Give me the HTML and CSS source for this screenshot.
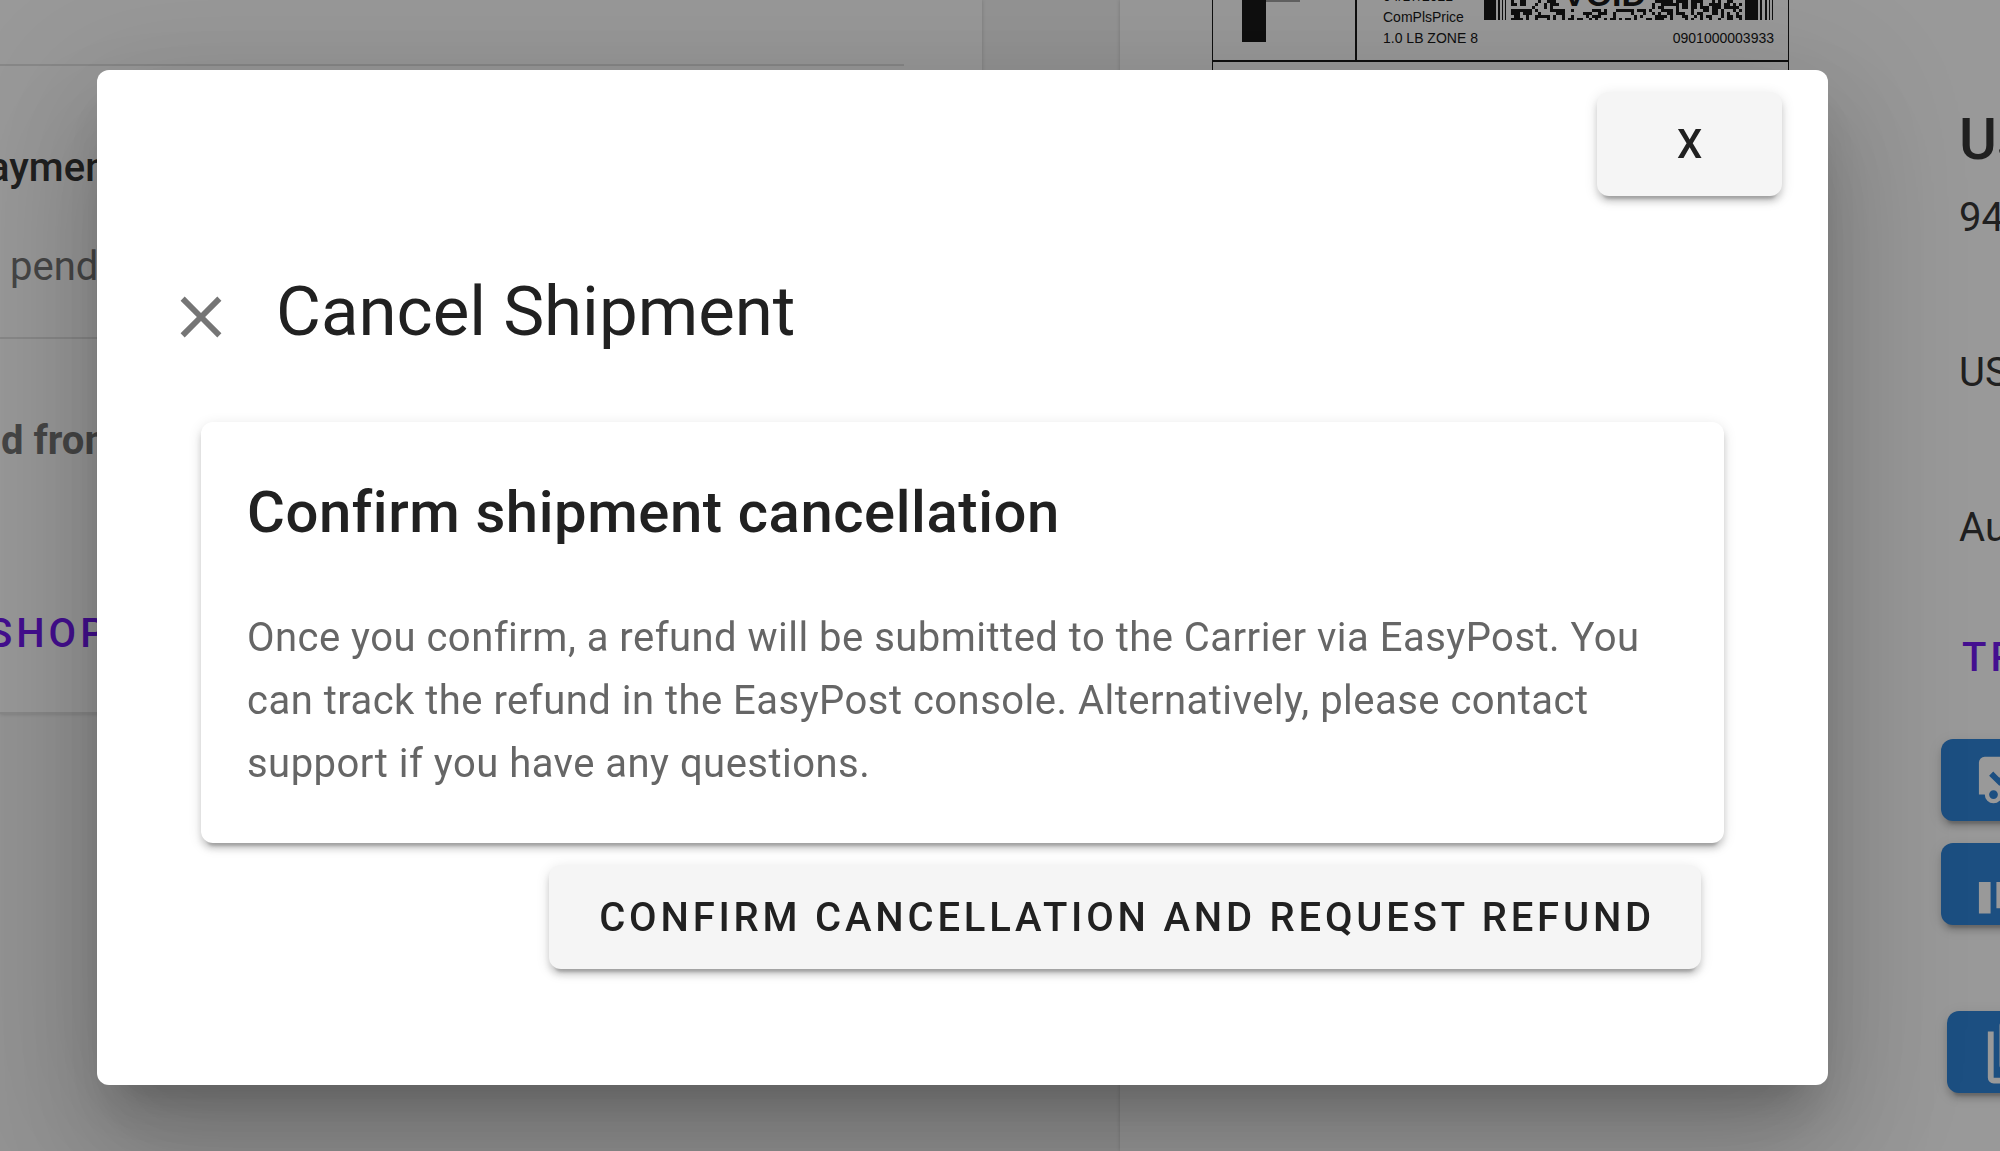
FILE: index.html
```
<!DOCTYPE html>
<html lang="en">
<head>
  <meta charset="UTF-8" />
  <meta name="viewport" content="width=device-width, initial-scale=1.0"/>
  <title>Cancel Shipment</title>
  <link rel="stylesheet" href="styles.css">
</head>
<body>

<main class="page">
  <!-- Order timeline -->
  <section class="timeline">
    <div class="timeline-row first"></div>
    <div class="timeline-row">
      <h3>ayment</h3>
      <p class="status">pending</p>
    </div>
    <div class="timeline-row last">
      <p class="source">d from</p>
      <a href="#" class="text-link">SHOP</a>
    </div>
  </section>

  <!-- Shipment -->
  <section class="shipment">
    <div class="label">
      <div class="label-top">
        <div class="label-class">
          <div class="letter-bar"></div>
          <div class="letter-arm"></div>
        </div>
        <div class="label-info">
          <div class="label-lines">
            <span>04/17/2021</span>
            <span>ComPlsPrice</span>
            <span>1.0 LB ZONE 8</span>
          </div>
          <div class="label-code">
            <svg id="barcode" width="290" height="20" viewBox="0 0 290 20"></svg>
            <strong class="void">VOID</strong>
            <span>0901000003933</span>
          </div>
        </div>
      </div>
    </div>

    <div class="details">
      <h2>Usps</h2>
      <ul>
        <li>9405</li>
        <li>USPS</li>
        <li>Aug</li>
      </ul>
      <a href="#" class="text-link">TRACK</a>
      <div class="actions">
        <button class="action-btn" aria-label="Mark as shipped">
          <svg viewBox="0 0 24 24"><path fill-rule="evenodd" d="M3 4a2 2 0 0 0-2 2v11h2a3 3 0 0 0 6 0h6a3 3 0 0 0 6 0h2v-5l-3-4h-3V4zM8 14l-3.5-3.500 1.400-1.400L8 11.200l4.600-4.600L14 8zM6 15.500a1.500 1.500 0 1 0 0 3a1.500 1.500 0 0 0 0-3zM18 15.500a1.500 1.500 0 1 0 0 3a1.500 1.500 0 0 0 0-3z"/></svg>
        </button>
        <button class="action-btn" aria-label="Show columns">
          <svg viewBox="0 0 24 24"><path d="M1 11.300h4v10.800H1zM7 11.300h5v9H7zM14 11.300h5v10.800h-5z"/></svg>
        </button>
        <button class="action-btn copy" aria-label="Duplicate">
          <svg viewBox="0 0 24 24"><path fill-rule="evenodd" d="M4 5H2v15.800a2 2 0 0 0 2 2h14v-2H4zM20 1H8a2 2 0 0 0-2 2v13.500a2 2 0 0 0 2 2h12a2 2 0 0 0 2-2V3a2 2 0 0 0-2-2zM20 16.500H8V3h12z"/></svg>
        </button>
      </div>
    </div>
  </section>
</main>

<!-- Cancel dialog -->
<div class="overlay">
  <div class="dialog" role="dialog" aria-labelledby="dialogTitle">
    <div class="dialog-top">
      <button class="btn close-btn">X</button>
    </div>
    <div class="dialog-header">
      <button class="icon-btn" aria-label="Close">
        <svg viewBox="0 0 24 24"><path d="M19 6.410L17.590 5L12 10.590L6.410 5L5 6.410L10.590 12L5 17.590L6.410 19L12 13.410L17.590 19L19 17.590L13.410 12z"/></svg>
      </button>
      <h1 id="dialogTitle">Cancel Shipment</h1>
    </div>
    <div class="card">
      <h2>Confirm shipment cancellation</h2>
      <p>Once you confirm, a refund will be submitted to the Carrier via EasyPost. You can track the refund in the EasyPost console. Alternatively, please contact support if you have any questions.</p>
    </div>
    <div class="dialog-actions">
      <button class="btn">CONFIRM CANCELLATION AND REQUEST REFUND</button>
    </div>
  </div>
</div>

<script>
  // Draw the shipping barcode
  const barcode = document.getElementById('barcode');
  let path = '';

  function bar(x, y, w, h) {
    path += `M${x} ${y}h${w}v${h}h-${w}z`;
  }

  // start and stop bars
  [[0, 12], [14, 2], [18, 1], [21, 1], [261, 13], [276, 2], [281, 2], [285, 1], [288, 1]].forEach(function(b) {
    bar(b[0], 0, b[1], 20);
  });

  // data cells, leaving room for the VOID mark
  let seed = 7;
  for (let y = 0; y < 20; y += 3) {
    for (let x = 27; x < 257; x += 3) {
      seed = (seed * 1103515 + 12345) % 2147483648;
      if (y < 8 && x > 74 && x < 166) continue;
      if (seed / 2147483648 < 0.52) bar(x, y, 3, 3);
    }
  }

  barcode.innerHTML = `<path d="${path}"/>`;
</script>

</body>
</html>
```
FILE: styles.css
```
* {
  box-sizing: border-box;
}

body {
  margin: 0;
  font-family: Roboto, sans-serif;
  font-size: 40px;
  line-height: 64px;
  color: #212121;
  background: #f5f5f5;
  overflow: hidden;
}

h1, h2, h3, p, ul {
  margin: 0;
  padding: 0;
}

button {
  font-family: inherit;
  border: none;
  cursor: pointer;
}

svg {
  display: block;
  fill: currentColor;
}

.page {
  display: grid;
  grid-template-columns: 49.1% 44%;
  justify-content: space-between;
  min-height: 100vh;
  overflow: hidden;
}

/* Timeline */
.timeline {
  align-self: start;
  overflow: hidden;
  background: white;
  box-shadow: 0 0 4px rgba(0,0,0,0.2);
}

.timeline-row {
  margin-left: -12px;
  padding: 70px 0 38px;
  border-bottom: 2px solid #e0e0e0;
}

.timeline-row.first {
  height: 66px;
  margin-right: 78px;
  padding: 0;
}

.timeline-row.last {
  padding-bottom: 46px;
}

.timeline-row h3 {
  font-size: 40px;
  font-weight: 500;
}

.timeline-row .status {
  margin-top: 35px;
  padding-left: 22px;
  color: #666;
}

.timeline-row .source {
  padding-left: 13px;
  margin-bottom: 129px;
  font-weight: 700;
  color: #666;
}

.text-link {
  display: block;
  font-weight: 500;
  letter-spacing: 4px;
  color: #6200ee;
  text-decoration: none;
}

/* Shipment */
.shipment {
  display: flex;
  justify-content: space-between;
  padding-left: 92px;
  background: white;
  box-shadow: 0 0 4px rgba(0,0,0,0.2);
}

.label {
  flex: 0 0 577px;
  align-self: flex-start;
  aspect-ratio: 2 / 3;
  border: 1px solid black;
  border-top: none;
  color: black;
  font-family: "Liberation Sans", sans-serif;
  font-size: 14px;
  line-height: 21px;
}

.label-top {
  display: flex;
  height: 62px;
  border-bottom: 2px solid black;
}

.label-class {
  display: flex;
  width: 144px;
  padding-left: 29px;
  border-right: 2px solid black;
}

.letter-bar {
  width: 24px;
  height: 42px;
  background: black;
}

.letter-arm {
  width: 34px;
  height: 2px;
  background: #999;
}

.label-info {
  flex: 1;
  display: flex;
  justify-content: space-between;
  padding: 0 14px 0 26px;
}

.label-lines {
  display: flex;
  flex-direction: column;
  margin-top: -14px;
}

.label-code {
  position: relative;
  display: flex;
  flex-direction: column;
  align-items: flex-end;
  gap: 8px;
}

.void {
  position: absolute;
  top: -16px;
  left: 79px;
  font-size: 34px;
}

.details {
  width: 59px;
  padding-top: 99px;
  white-space: nowrap;
}

.details h2 {
  padding-left: 18px;
  font-size: 58px;
  font-weight: 500;
  line-height: 80px;
}

.details ul {
  display: flex;
  flex-direction: column;
  gap: 91px;
  margin: 7px 0 66px;
  padding-left: 18px;
  list-style: none;
}

.details .text-link {
  padding-left: 21px;
}

.actions {
  display: flex;
  flex-direction: column;
  gap: 22px;
  margin-top: 49px;
}

.action-btn {
  width: 185px;
  height: 82px;
  padding: 0 35px;
  border-radius: 12px;
  color: white;
  background: #1976d2;
  box-shadow: 0 9px 3px -6px rgba(0,0,0,0.2), 0 6px 6px rgba(0,0,0,0.14), 0 3px 14px rgba(0,0,0,0.12);
}

.action-btn.copy {
  margin: 64px 0 0 6px;
}

.action-btn svg {
  width: 70px;
  height: 70px;
}

/* Dialog */
.overlay {
  position: fixed;
  inset: 0;
  padding: 70px 172px 66px 97px;
  background: rgba(33,33,33,0.46);
}

.dialog {
  height: 100%;
  padding: 22px 46px;
  border-radius: 12px;
  background: white;
  box-shadow: 0 32px 43px -20px rgba(0,0,0,0.2), 0 69px 110px 9px rgba(0,0,0,0.14), 0 26px 133px 23px rgba(0,0,0,0.12);
}

.dialog-top, .dialog-actions {
  display: flex;
  justify-content: flex-end;
}

.btn {
  min-width: 185px;
  height: 104px;
  padding: 0 46px 0 50px;
  border-radius: 12px;
  color: #212121;
  background: #f5f5f5;
  font-size: 40px;
  font-weight: 500;
  letter-spacing: 0.095em;
  box-shadow: 0 9px 3px -6px rgba(0,0,0,0.2), 0 6px 6px rgba(0,0,0,0.14), 0 3px 14px rgba(0,0,0,0.12);
}

.dialog-header {
  display: flex;
  align-items: center;
  gap: 40px;
  margin-top: 68px;
  padding-left: 23px;
}

.dialog-header h1 {
  font-size: 69px;
  font-weight: 400;
  line-height: 96px;
}

.icon-btn {
  padding: 10px 0 0;
  color: #757575;
  background: none;
}

.icon-btn svg {
  width: 70px;
  height: 70px;
}

.card {
  margin: 62px 58px 22px;
  padding: 44px 46px 48px;
  border-radius: 12px;
  box-shadow: 0 9px 3px -6px rgba(0,0,0,0.2), 0 6px 6px rgba(0,0,0,0.14), 0 3px 14px rgba(0,0,0,0.12);
}

.card h2 {
  margin-bottom: 48px;
  font-size: 58px;
  font-weight: 500;
  line-height: 92px;
  letter-spacing: 0.01em;
}

.card p {
  line-height: 63px;
  color: #666;
  letter-spacing: 0.012em;
}

.dialog-actions {
  padding-right: 81px;
}
```
